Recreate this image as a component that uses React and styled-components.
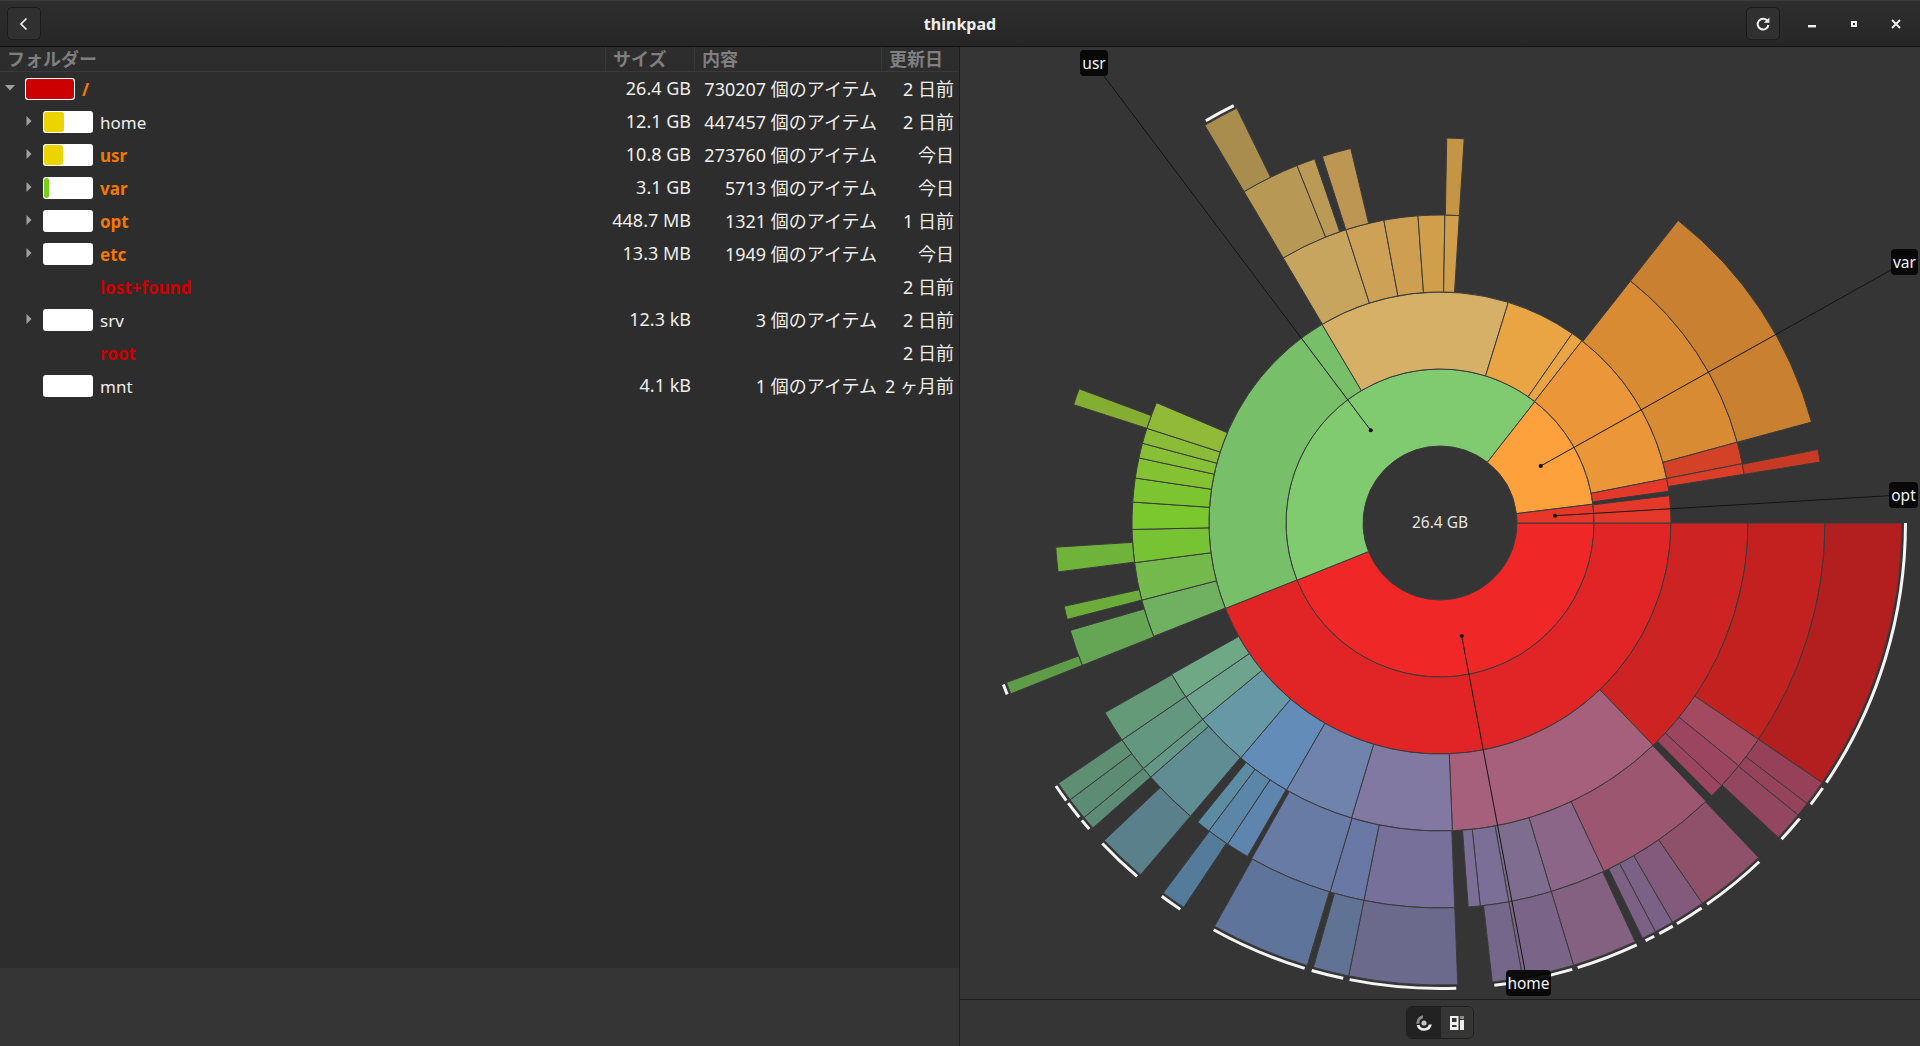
import React from 'react';
import styled, { createGlobalStyle } from 'styled-components';

const GlobalStyle = createGlobalStyle`
  html, body {
    margin: 0;
    padding: 0;
    height: 100%;
    background: #353535;
    overflow: hidden;
  }
  body {
    font-family: "Noto Sans", "Noto Sans CJK JP", sans-serif;
    color: #eeeeec;
  }
`;

const Window = styled.div`
  display: flex;
  flex-direction: column;
  width: 1920px;
  height: 1046px;
`;

const HeaderBar = styled.header`
  display: flex;
  align-items: center;
  flex: none;
  height: 47px;
  box-sizing: border-box;
  padding: 0 3px 0 7px;
  background: linear-gradient(#2e2e2e, #262626);
  border-top: 1px solid #3c3c3c;
  border-bottom: 1px solid #111;
`;

const HeaderButton = styled.button`
  display: flex;
  align-items: center;
  justify-content: center;
  flex: none;
  width: 34px;
  height: 33px;
  padding: 0;
  color: #eeeeec;
  background: #303030;
  border: 1px solid #1b1b1b;
  border-radius: 5px;
`;

const Title = styled.div`
  flex: 1;
  text-align: center;
  font-size: 16px;
  font-weight: 700;
  padding-left: 133px;
  color: #eeeeec;
`;

const WindowControls = styled.div`
  display: flex;
  align-items: center;
  margin-left: 11px;
`;

const WindowControl = styled.div`
  display: flex;
  align-items: center;
  justify-content: center;
  width: 42px;
  height: 32px;
  color: #eeeeec;
`;

const Panes = styled.div`
  display: flex;
  flex: 1;
  min-height: 0;
`;

const LeftPane = styled.section`
  display: flex;
  flex-direction: column;
  flex: none;
  width: 959px;
  border-right: 1px solid #1e1e1e;
`;

const Table = styled.div`
  flex: 1;
  background: #2d2d2d;
`;

const LeftFooter = styled.div`
  flex: none;
  height: 78px;
  background: #353535;
`;

const columns = '605px 89px 187px 78px';

const ColumnHeader = styled.div`
  display: grid;
  grid-template-columns: ${columns};
  height: 25px;
  box-sizing: border-box;
  border-bottom: 1px solid #3a3a3a;
`;

const ColumnTitle = styled.div`
  display: flex;
  align-items: center;
  padding-left: ${(p) => p.$pad}px;
  font-size: 18px;
  font-weight: 700;
  color: #7f7f7f;
  line-height: 24px;
  border-left: ${(p) => (p.$first ? 'none' : '1px solid #3a3a3a')};
  overflow: hidden;
`;

const Row = styled.div`
  display: grid;
  grid-template-columns: ${columns};
  height: 33px;
  align-items: center;
  font-size: 17px;
`;

const NameCell = styled.div`
  display: flex;
  align-items: center;
  padding-left: ${(p) => 5 + p.$depth * 18}px;
`;

const Expander = styled.span`
  display: flex;
  align-items: center;
  flex: none;
  box-sizing: border-box;
  width: 20px;
  height: 12px;
  padding-left: ${(p) => (p.$open ? 0 : 3)}px;
  margin-top: -2px;
`;

const UsageBar = styled.span`
  display: block;
  flex: none;
  box-sizing: border-box;
  width: 50px;
  height: 22px;
  margin-right: 7px;
  padding: 1px;
  background: #fff;
  border-radius: 3px;
  visibility: ${(p) => (p.$hidden ? 'hidden' : 'visible')};
`;

const UsageFill = styled.span`
  display: block;
  height: 100%;
  border-radius: 3px;
  background: ${(p) => p.$color};
`;

const Name = styled.span`
  font-weight: ${(p) => (p.$tone ? 700 : 400)};
  color: ${(p) => (p.$tone === 'orange' ? '#f57900' : p.$tone === 'red' ? '#cc0000' : '#eeeeec')};
  margin-top: 1px;
`;

const Cell = styled.div`
  text-align: right;
  padding-right: ${(p) => p.$pad}px;
  color: #eeeeec;
  white-space: nowrap;
  font-size: 18px;
  margin-top: -1px;
`;

const ChartPane = styled.section`
  display: flex;
  flex-direction: column;
  flex: 1;
  min-width: 0;
  background: #353535;
`;

const ChartArea = styled.div`
  position: relative;
  flex: none;
  height: 952px;
  border-bottom: 1px solid #1e1e1e;
`;

const ChartSvg = styled.svg`
  display: block;
  width: 960px;
  height: 952px;
`;

const CenterLabel = styled.div`
  position: absolute;
  left: 429px;
  top: 462px;
  width: 102px;
  text-align: center;
  font-size: 15.5px;
  line-height: 26px;
  color: #e4e4e4;
`;

const Tip = styled.div`
  position: absolute;
  left: ${(p) => p.$x - 960}px;
  top: ${(p) => p.$y - 47}px;
  box-sizing: border-box;
  width: ${(p) => p.$w}px;
  height: 26px;
  line-height: 26px;
  text-align: center;
  font-size: 15.5px;
  color: #f2f2f2;
  background: rgba(5, 5, 5, 0.94);
  border-radius: 4px;
`;

const ChartFooter = styled.div`
  display: flex;
  justify-content: center;
  align-items: flex-start;
  flex: 1;
  padding-top: 6px;
`;

const ViewSwitch = styled.div`
  display: flex;
  height: 33px;
  box-sizing: border-box;
  border: 1px solid #1f1f1f;
  border-radius: 6px;
  overflow: hidden;
`;

const ViewButton = styled.div`
  display: flex;
  align-items: center;
  justify-content: center;
  width: ${(p) => p.$w}px;
  background: ${(p) => (p.$active ? '#222222' : '#353535')};
`;

const CX = 1440;
const CY = 523;
const radii = [77, 154, 231, 308, 385, 462];

const polar = (r, deg) => {
  const t = (deg * Math.PI) / 180;
  return [CX + r * Math.cos(t), CY + r * Math.sin(t)];
};

const arcPath = (ring, a0, a1) => {
  const r0 = radii[ring];
  const r1 = radii[ring + 1];
  const large = a1 - a0 > 180 ? 1 : 0;
  const [x0, y0] = polar(r0, a0);
  const [x1, y1] = polar(r1, a0);
  const [x2, y2] = polar(r1, a1);
  const [x3, y3] = polar(r0, a1);
  return `M${x0} ${y0}L${x1} ${y1}A${r1} ${r1} 0 ${large} 1 ${x2} ${y2}L${x3} ${y3}A${r0} ${r0} 0 ${large} 0 ${x0} ${y0}Z`;
};

const edgePath = (a0, a1) => {
  const [x0, y0] = polar(465.5, a0);
  const [x1, y1] = polar(465.5, a1);
  return `M${x0} ${y0}A465.5 465.5 0 0 1 ${x1} ${y1}`;
};

// [ring, start angle, end angle, colour]  angles clockwise from east
const segments = [
  [0, 0, 158.2, '#ef2727'],
  [0, 158.2, 308, '#80cb70'],
  [0, 308, 353, '#fca13b'],
  [0, 353, 360, '#e7372b'],

  [1, 0, 158.3, '#e12526'],
  [1, 158.3, 239.3, '#78bf69'],
  [1, 239.3, 287.2, '#d5b066'],
  [1, 287.2, 304.9, '#e9a544'],
  [1, 304.9, 307.9, '#e9a544'],
  [1, 307.9, 348.9, '#eb9639'],
  [1, 348.9, 352.1, '#e4392a'],
  [1, 353.2, 360, '#e4392a'],

  [2, 0, 46.2, '#cd2322'],
  [2, 46.2, 87.7, '#a6607c'],
  [2, 87.7, 106.7, '#8179a2'],
  [2, 106.7, 119.9, '#6f83ad'],
  [2, 119.9, 130.3, '#638cb9'],
  [2, 130.3, 140.4, '#6798a6'],
  [2, 140.4, 145.6, '#6ea38e'],
  [2, 145.6, 150.6, '#6fa885'],
  [2, 158.4, 165.5, '#70b061'],
  [2, 165.5, 172.6, '#74b94c'],
  [2, 172.6, 178.8, '#78c333'],
  [2, 178.8, 183.9, '#7ac72e'],
  [2, 183.9, 188.4, '#7dc530'],
  [2, 188.4, 192.2, '#84c233'],
  [2, 192.2, 195, '#87bf35'],
  [2, 195, 197.9, '#8bbc37'],
  [2, 197.9, 203, '#90ba38'],
  [2, 239.4, 252.2, '#c7a55f'],
  [2, 252.2, 259.5, '#cda256'],
  [2, 259.5, 265.9, '#cf9f51'],
  [2, 265.9, 270.9, '#cf9f4c'],
  [2, 270.9, 273.6, '#cf9f4c'],
  [2, 308.2, 344.8, '#d98b33'],
  [2, 344.8, 348.9, '#d34126'],
  [2, 348.9, 350.9, '#dc3d28'],

  [3, 0, 34.2, '#c32020'],
  [3, 34.2, 39.1, '#a34a60'],
  [3, 39.1, 43, '#9c4560'],
  [3, 43, 45.1, '#9c4560'],
  [3, 46.3, 64.8, '#9c5670'],
  [3, 64.8, 73.2, '#8b6689'],
  [3, 73.2, 79.7, '#7f6d90'],
  [3, 79.7, 84, '#7b6f98'],
  [3, 84, 85.8, '#7b6f98'],
  [3, 87.8, 101.4, '#76709a'],
  [3, 101.4, 106.6, '#6a78a6'],
  [3, 106.6, 119.3, '#687ba4'],
  [3, 120, 123.5, '#5e85ae'],
  [3, 123.5, 126.9, '#5c86a8'],
  [3, 126.9, 129, '#5c8ca3'],
  [3, 130.4, 138.7, '#5f8d93'],
  [3, 138.7, 140.4, '#659786'],
  [3, 140.4, 145.7, '#64977f'],
  [3, 145.7, 150.5, '#659a78'],
  [3, 158.3, 163.8, '#65a655'],
  [3, 165.5, 167.5, '#6cac3b'],
  [3, 172.7, 176.4, '#6fb33a'],
  [3, 197.9, 200.4, '#83ae31'],
  [3, 239.4, 248.2, '#b89855'],
  [3, 248.2, 251, '#bb9a56'],
  [3, 252.2, 256.6, '#bd9653'],
  [3, 271, 273.6, '#c39544'],
  [3, 308.2, 344.8, '#c98030'],
  [3, 349, 350.9, '#c73a24'],

  [4, 0, 34.2, '#b31e1f'],
  [4, 34.2, 37.4, '#97405a'],
  [4, 37.4, 39.2, '#96425a'],
  [4, 39.2, 42.9, '#93465f'],
  [4, 46.4, 55.4, '#8f5069'],
  [4, 55.4, 59.8, '#835a7c'],
  [4, 59.8, 62.2, '#7a6186'],
  [4, 62.2, 64, '#7c6185'],
  [4, 65, 73.2, '#846081'],
  [4, 73.2, 79.7, '#7a6487'],
  [4, 79.7, 83.5, '#746789'],
  [4, 87.8, 101.4, '#6c6a8c'],
  [4, 101.4, 105.9, '#617394'],
  [4, 106.7, 119.2, '#5f749a'],
  [4, 123.7, 126.8, '#557b9a'],
  [4, 130.4, 136.6, '#5a808b'],
  [4, 138.7, 140.4, '#5c8b76'],
  [4, 140.4, 143.2, '#5d8c75'],
  [4, 143.2, 145.7, '#5e8f72'],
  [4, 158.3, 159.8, '#5f9c48'],
  [4, 239.4, 243.9, '#a98d4f'],
];

// white marks: more levels hidden past the outer ring
const edges = [
  [0, 33.9], [34.7, 37.2], [39.4, 42.8], [46.7, 55], [55.8, 59.4], [60, 61.9],
  [62.6, 63.8], [65, 72.8], [73.5, 83.3], [88, 101.2], [102, 106], [106.9, 119.1],
  [123.9, 126.7], [130.6, 136.5], [138.9, 140.3], [140.8, 143], [143.4, 145.6],
  [158.4, 159.7], [239.8, 243.7],
];

const leaders = [
  [1104, 76, 1370.7, 430.3],
  [1891, 270, 1540.7, 466],
  [1889, 495.7, 1555, 515.7],
  [1525.3, 972, 1461.7, 636],
];

const rows = [
  { depth: 0, open: true, name: '/', tone: 'orange', fill: '#cc0000', pct: 100, size: '26.4 GB', items: '730207 個のアイテム', date: '2 日前' },
  { depth: 1, arrow: true, name: 'home', fill: '#edd400', pct: 42, size: '12.1 GB', items: '447457 個のアイテム', date: '2 日前' },
  { depth: 1, arrow: true, name: 'usr', tone: 'orange', fill: '#edd400', pct: 40, size: '10.8 GB', items: '273760 個のアイテム', date: '今日' },
  { depth: 1, arrow: true, name: 'var', tone: 'orange', fill: '#73d216', pct: 11, size: '3.1 GB', items: '5713 個のアイテム', date: '今日' },
  { depth: 1, arrow: true, name: 'opt', tone: 'orange', pct: 0, size: '448.7 MB', items: '1321 個のアイテム', date: '1 日前' },
  { depth: 1, arrow: true, name: 'etc', tone: 'orange', pct: 0, size: '13.3 MB', items: '1949 個のアイテム', date: '今日' },
  { depth: 1, noBar: true, name: 'lost+found', tone: 'red', date: '2 日前' },
  { depth: 1, arrow: true, name: 'srv', pct: 0, size: '12.3 kB', items: '3 個のアイテム', date: '2 日前' },
  { depth: 1, noBar: true, name: 'root', tone: 'red', date: '2 日前' },
  { depth: 1, name: 'mnt', pct: 0, size: '4.1 kB', items: '1 個のアイテム', date: '2 ヶ月前' },
];

function Arrow({ open }) {
  return open ? (
    <svg width="10" height="6" viewBox="0 0 10 6">
      <path d="M0 0H10L5 5.5Z" fill="#a0a0a0" />
    </svg>
  ) : (
    <svg width="6" height="10" viewBox="0 0 6 10">
      <path d="M0.5 0V10L5.5 5Z" fill="#a0a0a0" />
    </svg>
  );
}

function Sunburst() {
  return (
    <ChartSvg viewBox="960 47 960 952">
      {segments.map(([ring, a0, a1, color], i) => (
        <path key={i} d={arcPath(ring, a0, a1)} fill={color} stroke="#3b3b3b" strokeWidth="1" />
      ))}
      {edges.map(([a0, a1], i) => (
        <path key={i} d={edgePath(a0, a1)} fill="none" stroke="#f4f4f4" strokeWidth="3" />
      ))}
      {leaders.map(([x0, y0, x1, y1], i) => (
        <g key={i}>
          <line x1={x0} y1={y0} x2={x1} y2={y1} stroke="#141414" strokeWidth="1" />
          <circle cx={x1} cy={y1} r="2" fill="#050505" />
        </g>
      ))}
    </ChartSvg>
  );
}

export default function App() {
  return (
    <Window>
      <GlobalStyle />
      <HeaderBar>
        <HeaderButton>
          <svg width="16" height="16" viewBox="0 0 16 16">
            <path d="M10.5 2.5 5 8l5.5 5.5" fill="none" stroke="#eeeeec" strokeWidth="1.7" />
          </svg>
        </HeaderButton>
        <Title>thinkpad</Title>
        <HeaderButton>
          <svg width="16" height="16" viewBox="0 0 16 16">
            <path d="M12.6 5.2A5.4 5.4 0 1 0 13.4 9" fill="none" stroke="#eeeeec" strokeWidth="2" />
            <path d="M8.8 6.8h5.6V1.4Z" fill="#eeeeec" />
          </svg>
        </HeaderButton>
        <WindowControls>
          <WindowControl>
            <svg width="10" height="10" viewBox="0 0 10 10">
              <rect x="1" y="6" width="8" height="2.4" fill="#eeeeec" />
            </svg>
          </WindowControl>
          <WindowControl>
            <svg width="8" height="8" viewBox="0 0 8 8">
              <path d="M1 1h6v6H1ZM3 3v2h2V3Z" fill="#eeeeec" fillRule="evenodd" />
            </svg>
          </WindowControl>
          <WindowControl>
            <svg width="10" height="10" viewBox="0 0 10 10">
              <path d="M1 1l8 8M9 1 1 9" stroke="#eeeeec" strokeWidth="1.9" />
            </svg>
          </WindowControl>
        </WindowControls>
      </HeaderBar>
      <Panes>
        <LeftPane>
          <Table>
            <ColumnHeader>
              <ColumnTitle $first $pad={7}>フォルダー</ColumnTitle>
              <ColumnTitle $pad={7}>サイズ</ColumnTitle>
              <ColumnTitle $pad={7}>内容</ColumnTitle>
              <ColumnTitle $pad={7}>更新日</ColumnTitle>
            </ColumnHeader>
            {rows.map((row) => (
              <Row key={row.name}>
                <NameCell $depth={row.depth}>
                  <Expander $open={row.open}>
                    {(row.arrow || row.open) && <Arrow open={row.open} />}
                  </Expander>
                  <UsageBar $hidden={row.noBar}>
                    {row.pct > 0 && <UsageFill $color={row.fill} style={{ width: `${row.pct}%` }} />}
                  </UsageBar>
                  <Name $tone={row.tone}>{row.name}</Name>
                </NameCell>
                <Cell $pad={3}>{row.size}</Cell>
                <Cell $pad={4}>{row.items}</Cell>
                <Cell $pad={5}>{row.date}</Cell>
              </Row>
            ))}
          </Table>
          <LeftFooter />
        </LeftPane>
        <ChartPane>
          <ChartArea>
            <Sunburst />
            <CenterLabel>26.4 GB</CenterLabel>
            <Tip $x={1080} $y={50} $w={28}>usr</Tip>
            <Tip $x={1891} $y={249} $w={27}>var</Tip>
            <Tip $x={1889} $y={482} $w={29}>opt</Tip>
            <Tip $x={1506} $y={970} $w={45}>home</Tip>
          </ChartArea>
          <ChartFooter>
            <ViewSwitch>
              <ViewButton $active $w={34}>
                <svg width="18" height="18" viewBox="0 0 18 18">
                  <path d="M8 1.2A7.8 7.8 0 0 0 1.5 10l3-.4A4.8 4.8 0 0 1 8 4.3Z" fill="#8c8c8c" />
                  <path d="M1.6 11A7.8 7.8 0 0 0 16.8 10.5h-3A4.8 4.8 0 0 1 4.6 10.9Z" fill="#eeeeec" />
                  <circle cx="9" cy="9" r="2.6" fill="#c4c4c4" />
                </svg>
              </ViewButton>
              <ViewButton $w={32}>
                <svg width="16" height="16" viewBox="0 0 16 16">
                  <path d="M1 1h8.5v14H1ZM3 3v4h4.5V3ZM3 10v2h4.5v-2Z" fill="#eeeeec" fillRule="evenodd" />
                  <rect x="11" y="1" width="4" height="3" fill="#8c8c8c" />
                  <rect x="11" y="5" width="4" height="10" fill="#eeeeec" />
                </svg>
              </ViewButton>
            </ViewSwitch>
          </ChartFooter>
        </ChartPane>
      </Panes>
    </Window>
  );
}
